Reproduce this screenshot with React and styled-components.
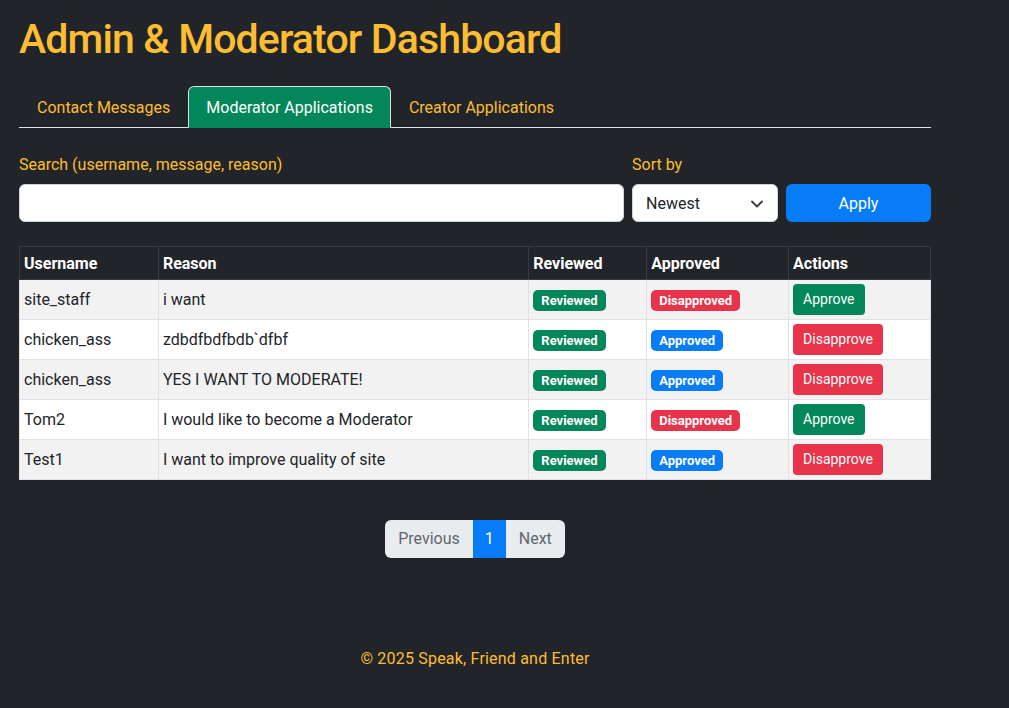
import React from "react";
import styled, { createGlobalStyle } from "styled-components";

const Global = createGlobalStyle`
  html, body { margin: 0; padding: 0; background: #212529; }
  body { font-family: Roboto, "Noto Sans", "Liberation Sans", sans-serif; font-size: 16px; line-height: 1.5; color: #212529; }
  * { box-sizing: border-box; }
`;

const YELLOW = "#fdbd32";
const GREEN = "#03865a";
const BLUE = "#077cf9";
const RED = "#e7344a";

const Page = styled.div`
  min-height: 708px;
  background: #212529;
  padding: 0 19px;
`;

const Container = styled.div`
  width: 912px;
  display: flex;
  flex-direction: column;
`;

const Title = styled.h1`
  margin: 15px 0 23px;
  font-size: 41px;
  font-weight: 500;
  line-height: 48px;
  letter-spacing: -0.85px;
  color: ${YELLOW};
`;

const Tabs = styled.nav`
  display: flex;
  border-bottom: 1px solid #dee2e6;
  margin-bottom: 24px;
`;

const Tab = styled.a`
  display: block;
  padding: 9px 17px 7px;
  margin-bottom: -1px;
  font-size: 16px;
  line-height: 24px;
  color: ${(p) => (p.$active ? "#ffffff" : YELLOW)};
  background: ${(p) => (p.$active ? GREEN : "transparent")};
  border: 1px solid ${(p) => (p.$active ? "#dee2e6" : "transparent")};
  border-bottom-color: ${(p) => (p.$active ? GREEN : "transparent")};
  border-radius: 6px 6px 0 0;
  cursor: pointer;
`;

const FilterRow = styled.div`
  display: grid;
  grid-template-columns: 605px 146px 145px;
  column-gap: 8px;
  margin-bottom: 24px;
  align-items: end;
`;

const Field = styled.div`
  display: flex;
  flex-direction: column;
`;

const Label = styled.label`
  color: ${YELLOW};
  font-size: 16px;
  line-height: 24px;
  padding-top: 1px;
  margin-bottom: 7px;
`;

const Input = styled.input`
  height: 38px;
  border: 1px solid #ced4da;
  border-radius: 6px;
  background: #fff;
  padding: 6px 12px;
  font: inherit;
  outline: none;
`;

const Select = styled.div`
  height: 38px;
  border: 1px solid #ced4da;
  border-radius: 6px;
  background: #fff;
  padding: 7px 12px 5px 13px;
  display: flex;
  align-items: center;
  justify-content: space-between;
  font-size: 16px;
  color: #212529;
`;

const ApplyButton = styled.button`
  height: 38px;
  border: none;
  border-radius: 6px;
  background: ${BLUE};
  color: #fff;
  font: inherit;
  font-size: 16px;
  padding-top: 2px;
`;

const Table = styled.table`
  width: 912px;
  border-collapse: collapse;
  margin-bottom: 40px;
`;

const Th = styled.th`
  background: #212529;
  color: #fff;
  font-weight: 700;
  text-align: left;
  padding: 5px 5px 3px 4px;
  line-height: 24px;
  border: 1px solid #373b3e;
  width: ${(p) => p.$w}px;
`;

const Tr = styled.tr`
  background: ${(p) => (p.$striped ? "#f2f2f2" : "#ffffff")};
`;

const Td = styled.td`
  padding: 4px;
  border: 1px solid #dee2e6;
  line-height: 24px;
  height: 40px;
  color: #212529;
  vertical-align: middle;
`;

const Badge = styled.span`
  display: inline-block;
  padding: 4px 8px;
  font-size: 13px;
  font-weight: 700;
  line-height: 13px;
  color: #fff;
  border-radius: 5px;
  background: ${(p) => p.$bg};
`;

const ActionButton = styled.button`
  height: 31px;
  padding: 4px 10px;
  border: none;
  border-radius: 4px;
  font: inherit;
  font-size: 14px;
  line-height: 21px;
  color: #fff;
  background: ${(p) => p.$bg};
`;

const Pager = styled.div`
  display: flex;
  justify-content: center;
`;

const PageItem = styled.span`
  display: block;
  height: 38px;
  padding: 7px ${(p) => (p.$active ? 12 : 13)}px 5px;
  line-height: 24px;
  font-size: 16px;
  background: ${(p) => (p.$active ? BLUE : "#e9ecef")};
  color: ${(p) => (p.$active ? "#fff" : "#5f666d")};
  &:first-child { border-radius: 6px 0 0 6px; }
  &:last-child { border-radius: 0 6px 6px 0; }
`;

const Footer = styled.footer`
  margin-top: 89px;
  text-align: center;
  color: ${YELLOW};
  font-size: 16px;
  line-height: 24px;
  letter-spacing: 0.2px;
`;

const rows = [
  { u: "site_staff", r: "i want", approved: false },
  { u: "chicken_ass", r: "zdbdfbdfbdb`dfbf", approved: true },
  { u: "chicken_ass", r: "YES I WANT TO MODERATE!", approved: true },
  { u: "Tom2", r: "I would like to become a Moderator", approved: false },
  { u: "Test1", r: "I want to improve quality of site", approved: true },
];

function Chevron() {
  return (
    <svg width="16" height="16" viewBox="0 0 16 16" fill="none">
      <path d="M3 5.5l5 5 5-5" stroke="#343a40" strokeWidth="1.8" strokeLinecap="round" strokeLinejoin="round" />
    </svg>
  );
}

export default function App() {
  return (
    <Page>
      <Global />
      <Container>
        <Title>Admin &amp; Moderator Dashboard</Title>
        <Tabs>
          <Tab>Contact Messages</Tab>
          <Tab $active>Moderator Applications</Tab>
          <Tab>Creator Applications</Tab>
        </Tabs>
        <FilterRow>
          <Field>
            <Label>Search (username, message, reason)</Label>
            <Input />
          </Field>
          <Field>
            <Label>Sort by</Label>
            <Select>
              <span>Newest</span>
              <Chevron />
            </Select>
          </Field>
          <ApplyButton>Apply</ApplyButton>
        </FilterRow>
        <Table>
          <thead>
            <tr>
              <Th $w={139}>Username</Th>
              <Th $w={371}>Reason</Th>
              <Th $w={118}>Reviewed</Th>
              <Th $w={142}>Approved</Th>
              <Th $w={142}>Actions</Th>
            </tr>
          </thead>
          <tbody>
            {rows.map((row, i) => (
              <Tr key={i} $striped={i % 2 === 0}>
                <Td>{row.u}</Td>
                <Td>{row.r}</Td>
                <Td>
                  <Badge $bg={GREEN}>Reviewed</Badge>
                </Td>
                <Td>
                  {row.approved ? (
                    <Badge $bg={BLUE}>Approved</Badge>
                  ) : (
                    <Badge $bg={RED}>Disapproved</Badge>
                  )}
                </Td>
                <Td>
                  {row.approved ? (
                    <ActionButton $bg={RED}>Disapprove</ActionButton>
                  ) : (
                    <ActionButton $bg={GREEN}>Approve</ActionButton>
                  )}
                </Td>
              </Tr>
            ))}
          </tbody>
        </Table>
        <Pager>
          <PageItem>Previous</PageItem>
          <PageItem $active>1</PageItem>
          <PageItem>Next</PageItem>
        </Pager>
        <Footer>© 2025 Speak, Friend and Enter</Footer>
      </Container>
    </Page>
  );
}
